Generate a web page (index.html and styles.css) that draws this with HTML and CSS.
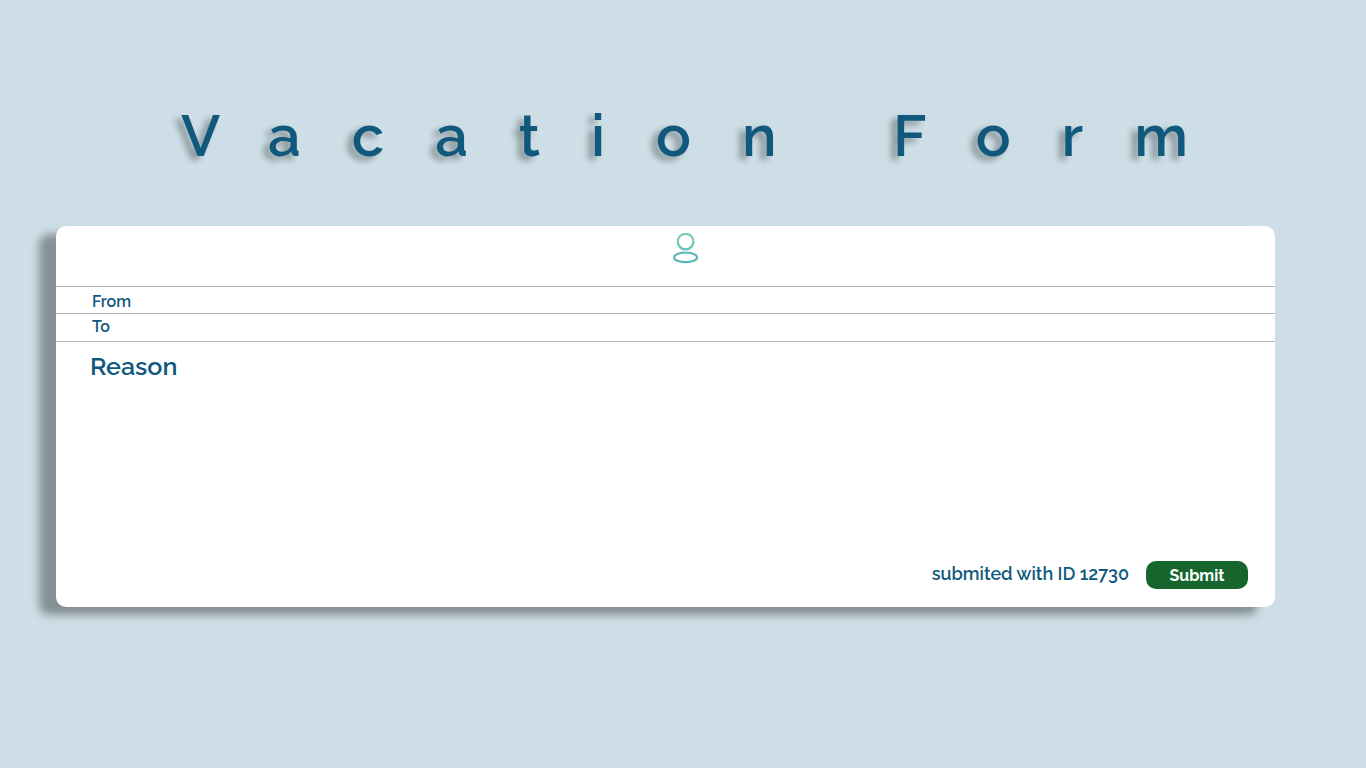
FILE: index.html
```html
<!DOCTYPE html>
<html lang="en">
<head>
<meta charset="utf-8">
<title>Vacation Form</title>
<meta name="viewport" content="width=device-width, initial-scale=1">
<link rel="stylesheet" href="styles.css">
</head>
<body>
<main class="page">
  <h1 class="title">Vacation Form</h1>
  <form class="card">
    <div class="card-head">
      <svg class="user-icon" viewBox="0 0 26 32" fill="none" aria-hidden="true">
        <defs>
          <linearGradient id="user-tint" gradientUnits="userSpaceOnUse" x1="13" y1="0" x2="13" y2="32">
            <stop offset="0" stop-color="#83cfb5"/>
            <stop offset="1" stop-color="#50b3bd"/>
          </linearGradient>
        </defs>
        <g stroke="url(#user-tint)" stroke-width="2.2">
          <circle cx="12.6" cy="8.6" r="7.8"/>
          <ellipse cx="12.6" cy="24.4" rx="11.5" ry="4.8"/>
        </g>
      </svg>
    </div>
    <div class="row row-from">
      <label class="label" for="from">From</label>
      <input class="field" id="from" type="text">
    </div>
    <div class="row row-to">
      <label class="label" for="to">To</label>
      <input class="field" id="to" type="text">
    </div>
    <div class="reason">
      <label class="reason-label" for="reason">Reason</label>
      <textarea class="field reason-field" id="reason"></textarea>
    </div>
    <div class="footer">
      <output class="status">submited with ID 12730</output>
      <button class="submit" type="button">Submit</button>
    </div>
  </form>
</main>
</body>
</html>
```
FILE: styles.css
```css
* {
  box-sizing: border-box;
}

body {
  margin: 0;
  min-height: 100vh;
  background: #cddee6;
  color: #10597d;
  font-family: Raleway, Lato, sans-serif;
  font-weight: 600;
}

.page {
  padding: 96px 91px 0 56px;
}

.title {
  margin: 0 0 50px;
  padding-left: 89px;
  font-size: 58px;
  font-weight: 600;
  line-height: 80px;
  text-align: center;
  letter-spacing: 51px;
  white-space: nowrap;
  text-shadow: -6px 4px 6px rgba(0, 0, 0, 0.35);
}

.card {
  background: #fff;
  border-radius: 10px;
  box-shadow: -17px 8px 8px #869195;
}

.card-head {
  display: flex;
  justify-content: center;
  height: 60px;
  padding: 7px 0 0 40px;
}

.user-icon {
  width: 26px;
  height: 32px;
}

.row {
  display: flex;
  align-items: center;
  padding: 0 36px;
  border-top: 1px solid #b3b5b6;
}

.row-from {
  padding-top: 5px;
  padding-bottom: 1px;
}

.row-to {
  padding-top: 3px;
  padding-bottom: 4px;
}

.label {
  width: 60px;
  font-size: 16px;
  line-height: 20px;
}

.field {
  flex: 1;
  border: 0;
  padding: 0;
  background: transparent;
  color: inherit;
  font: inherit;
  outline: 0;
}

.reason {
  display: flex;
  flex-direction: column;
  height: 220px;
  padding: 7px 34px 0;
  border-top: 1px solid #b3b5b6;
}

.reason-label {
  font-size: 25px;
  line-height: 34px;
}

.reason-field {
  resize: none;
}

.footer {
  display: flex;
  justify-content: flex-end;
  align-items: flex-start;
  gap: 17px;
  padding: 0 27px 18px;
}

.status {
  font-size: 18px;
  line-height: 26px;
}

.submit {
  width: 102px;
  height: 28px;
  border: 0;
  border-radius: 10px;
  background: #15652d;
  color: #fff;
  font: inherit;
  font-size: 16px;
  font-weight: 700;
}
```
